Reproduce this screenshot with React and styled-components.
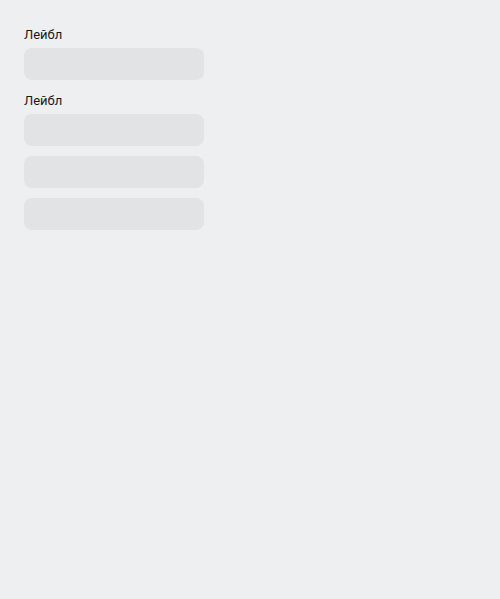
import React from "react";
import styled, { createGlobalStyle } from "styled-components";

const GlobalStyle = createGlobalStyle`
  html, body {
    margin: 0;
    padding: 0;
    background: #eeeff1;
  }
  body {
    font-family: Roboto, "Noto Sans", Arial, sans-serif;
  }
`;

const Page = styled.div`
  min-height: 599px;
  box-sizing: border-box;
  padding: 24px;
  display: flex;
  flex-direction: column;
  gap: 10px;
  background: #eeeff1;
`;

const Field = styled.div`
  display: flex;
  flex-direction: column;
  gap: 5px;
  width: 180px;
`;

const Label = styled.label`
  padding-top: 3px;
  font-size: 13px;
  line-height: 16px;
  color: #19191a;
`;

const Skeleton = styled.div`
  width: 180px;
  height: 32px;
  border-radius: 8px;
  background: #e2e3e5;
`;

const App = () => {
  return (
    <>
      <GlobalStyle />
      <Page>
        <Field>
          <Label>Лейбл</Label>
          <Skeleton />
        </Field>
        <Field>
          <Label>Лейбл</Label>
          <Skeleton />
        </Field>
        <Skeleton />
        <Skeleton />
      </Page>
    </>
  );
};

export default App;
